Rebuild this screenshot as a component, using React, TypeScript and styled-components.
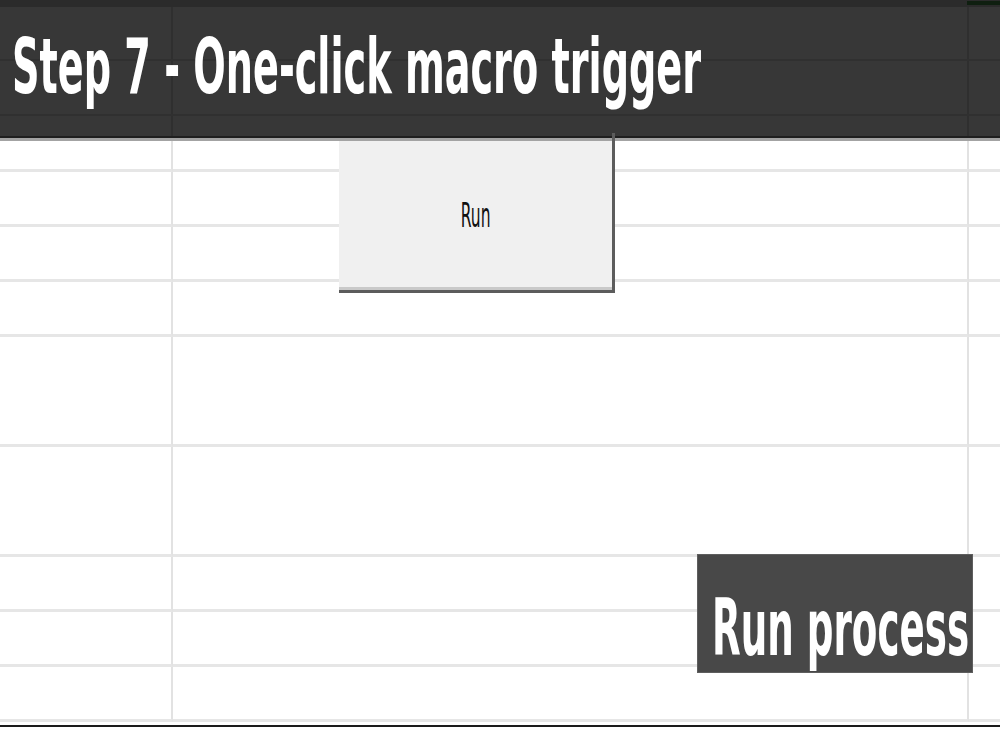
import React from "react";
import styled, { createGlobalStyle } from "styled-components";

const GlobalStyle = createGlobalStyle`
  html, body {
    margin: 0;
    padding: 0;
    background: #ffffff;
  }
  body {
    font-family: "DejaVu Sans", "Liberation Sans", sans-serif;
  }
`;

const Sheet = styled.div`
  position: relative;
  width: 1000px;
  height: 750px;
  overflow: hidden;
  background: #ffffff;
`;

/* Merged title cell spanning the top rows of the sheet */
const TitleBand = styled.header`
  display: flex;
  flex-direction: column;
  border-top: 7px solid #2b2b2b;
  border-bottom: 2px solid #1f1f1f;
  background-color: #373737;
  background-image:
    linear-gradient(
      to bottom,
      transparent 52px,
      #303030 52px,
      #303030 54px,
      transparent 54px,
      transparent 107px,
      #303030 107px,
      #303030 109px,
      transparent 109px
    ),
    linear-gradient(
      to right,
      transparent 171px,
      #2f2f2f 171px,
      #2f2f2f 173px,
      transparent 173px,
      transparent 967px,
      #2f2f2f 967px,
      #2f2f2f 969px,
      transparent 969px
    );
  position: relative;
`;

const ActiveMarker = styled.span`
  position: absolute;
  top: -6px;
  left: 967px;
  right: 0;
  height: 4px;
  background: #0f1f10;
`;

const TitleCell = styled.div`
  height: 129px;
  box-sizing: border-box;
  padding: 21px 0 0 12px;
  overflow: hidden;
  white-space: nowrap;
`;

const TitleShade = styled.div`
  height: 3px;
  background: #a3a3a3;
`;

const Squeeze = styled.span<{ $origin?: string; $ratio?: number }>`
  display: inline-block;
  white-space: nowrap;
  transform: scaleX(${(p) => p.$ratio ?? 0.49});
  transform-origin: ${(p) => p.$origin ?? "left center"};
`;

const Title = styled.h1`
  margin: 0;
  font-family: "DejaVu Sans", "Liberation Sans", sans-serif;
  font-weight: 700;
  font-size: 77px;
  line-height: 77px;
  color: #ffffff;
`;

const Grid = styled.div`
  display: grid;
  grid-template-columns: 173px 796px 1fr;
  grid-template-rows: 31px 55px 55px 55px 110px 110px 55px 55px 55px;
  margin-bottom: 3px;
`;

const Cell = styled.div<{ $last?: boolean }>`
  box-sizing: border-box;
  border-bottom: 3px solid #e6e6e6;
  border-right: ${(p) => (p.$last ? "none" : "2px solid #e2e2e2")};
`;

const BottomRule = styled.div`
  height: 2px;
  background: #1b1b1b;
`;

/* Form-control button floating over the sheet */
const MacroButton = styled.button`
  position: absolute;
  left: 339px;
  top: 141px;
  width: 276px;
  height: 152px;
  box-sizing: border-box;
  margin: 0;
  padding: 0;
  display: flex;
  align-items: center;
  justify-content: center;
  background: #f0f0f0;
  border: none;
  border-right: 3px solid #5c5c5c;
  border-bottom: 3px solid #5c5c5c;
  box-shadow: inset 0 -3px 0 #c9c9c9;
  font-family: "DejaVu Sans", "Liberation Sans", sans-serif;
  font-size: 33px;
  line-height: 33px;
  color: #111111;
  cursor: pointer;
  &::before {
    content: "";
    position: absolute;
    right: -3px;
    top: -8px;
    width: 3px;
    height: 8px;
    background: #5c5c5c;
  }
`;

/* Shape with text assigned to the macro */
const ProcessShape = styled.div`
  position: absolute;
  left: 697px;
  top: 554px;
  width: 276px;
  height: 119px;
  box-sizing: border-box;
  padding: 34px 0 0 14px;
  overflow: hidden;
  background: #484848;
  border: 1px solid #5e5e5e;
  font-family: "DejaVu Sans", "Liberation Sans", sans-serif;
  font-weight: 700;
  font-size: 78px;
  line-height: 78px;
  color: #ffffff;
`;

const rows = 9;
const cols = 3;

export default function App() {
  const cells: React.ReactNode[] = [];
  for (let r = 0; r < rows; r++) {
    for (let c = 0; c < cols; c++) {
      cells.push(<Cell key={`${r}-${c}`} $last={c === cols - 1} />);
    }
  }

  return (
    <>
      <GlobalStyle />
      <Sheet>
        <TitleBand>
          <ActiveMarker />
          <TitleCell>
            <Title>
              <Squeeze $ratio={0.496}>Step 7 - One-click macro trigger</Squeeze>
            </Title>
          </TitleCell>
        </TitleBand>
        <TitleShade />
        <Grid>{cells}</Grid>
        <BottomRule />
        <MacroButton type="button">
          <Squeeze $origin="center center" $ratio={0.47}>
            Run
          </Squeeze>
        </MacroButton>
        <ProcessShape>
          <Squeeze $ratio={0.478}>Run process</Squeeze>
        </ProcessShape>
      </Sheet>
    </>
  );
}
